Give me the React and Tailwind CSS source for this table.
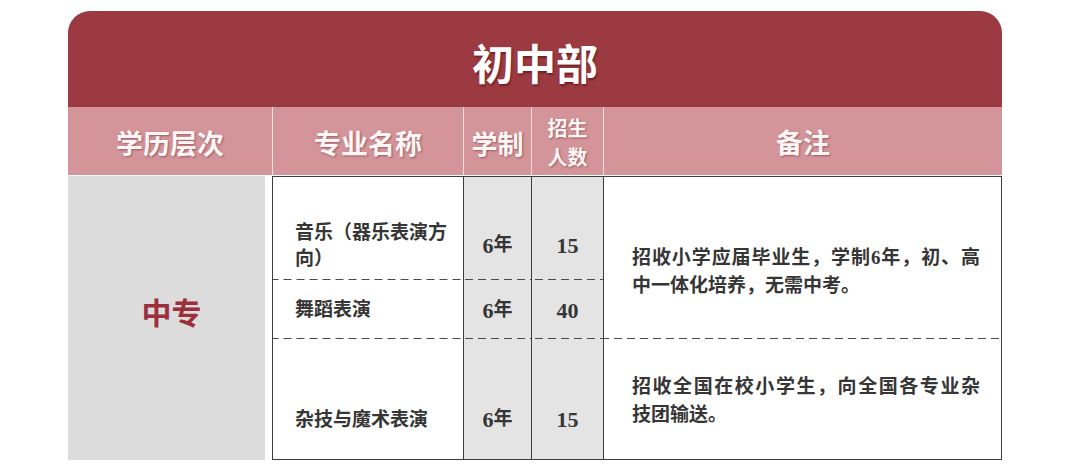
const dashB =
  "bg-[linear-gradient(to_right,#4a4a4a_8px,transparent_8px)] bg-[length:13px_1px] bg-repeat-x bg-bottom";
const dashT =
  "bg-[linear-gradient(to_right,#4a4a4a_8px,transparent_8px)] bg-[length:13px_1px] bg-repeat-x bg-top";

const rows = [
  { lines: ["音乐（器乐表演方", "向）"], years: "6", count: "15", box: "h-[103px] pt-[34px]", dash: dashB },
  { lines: ["舞蹈表演"], years: "6", count: "40", box: "h-[58px] pt-[2px]", dash: "" },
];

function Row({ lines, years, count, box, dash }) {
  return (
    <div className="flex">
      <div className={`w-[190px] pl-[22px] flex flex-col justify-center ${box} ${dash}`}>
        {lines.map((l) => (
          <div key={l} className="leading-[26px]">{l}</div>
        ))}
      </div>
      <div className={`w-[68px] border-l border-[#3d3d3d] bg-[#e4e4e4] flex items-center justify-center ${box} ${dash}`}>
        <span className="text-[22px]">{years}</span>
        <span>年</span>
      </div>
      <div className={`w-[72px] border-l border-[#3d3d3d] bg-[#e4e4e4] flex items-center justify-center text-[22px] ${box} ${dash}`}>
        {count}
      </div>
    </div>
  );
}

function Note({ first, rest }) {
  return (
    <div className="w-[348px]">
      <div className="text-justify [text-align-last:justify] leading-[28px]">{first}</div>
      <div className="leading-[28px]">{rest}</div>
    </div>
  );
}

export default function App() {
  return (
    <div className="w-[1071px] h-[476px] bg-white pt-[11px] pl-[68px] font-['Noto_Sans_CJK_SC',sans-serif]">
      <div className="w-[934px]">
        {/* title */}
        <div className="h-[96px] rounded-t-[22px] bg-[#9c3a41] flex items-center justify-center pt-[6px]">
          <h1 className="text-[42px] font-bold text-white leading-none [text-shadow:1px_2px_2px_rgba(60,0,0,0.45)]">
            初中部
          </h1>
        </div>

        {/* header */}
        <div className="grid grid-cols-[204px_191px_68px_72px_399px] h-[68px] bg-[#d3959a] text-[#fff7f7] font-bold [text-shadow:1px_1px_2px_rgba(90,20,25,0.45)]">
          <div className="flex items-center justify-center text-[27px] pt-[5px]">学历层次</div>
          <div className="flex items-center justify-center text-[27px] pt-[5px] border-l border-[#f3dfe0]">专业名称</div>
          <div className="flex items-center justify-center text-[26px] pt-[3px] border-l border-[#f3dfe0]">学制</div>
          <div className="flex flex-col items-center justify-center text-[20px] pt-[2px] border-l border-[#f3dfe0]">
            <span className="leading-[29px]">招生</span>
            <span className="leading-[29px]">人数</span>
          </div>
          <div className="flex items-center justify-center text-[27px] pt-[3px] border-l border-[#f3dfe0]">备注</div>
        </div>

        {/* body */}
        <div className="flex mt-px font-['Liberation_Serif','Noto_Sans_CJK_SC',serif] font-bold text-[19px] text-[#363636]">
          <div className="w-[204px] flex pr-[7px]">
            <div className="flex-1 bg-[#dcdcdc] flex items-center justify-center pl-[10px] pb-[14px]">
              <span className="text-[30px] text-[#9b2f3b] font-['Noto_Sans_CJK_SC',sans-serif]">中专</span>
            </div>
          </div>

          <div className="w-[730px] border border-[#3d3d3d] flex flex-col">
            <div className="flex">
              <div className="w-[330px] flex flex-col">
                {rows.map((r) => (
                  <Row key={r.count + r.lines[0]} {...r} />
                ))}
              </div>
              <div className="w-[398px] border-l border-[#3d3d3d] pl-[28px] pt-[28px] flex items-center">
                <Note first="招收小学应届毕业生，学制6年，初、高" rest="中一体化培养，无需中考。" />
              </div>
            </div>
            <div className="flex">
              <Row lines={["杂技与魔术表演"]} years="6" count="15" box="h-[121px] pt-[42px]" dash={dashT} />
              <div className={`w-[398px] border-l border-[#3d3d3d] pl-[28px] pt-[4px] flex items-center ${dashT}`}>
                <Note first="招收全国在校小学生，向全国各专业杂" rest="技团输送。" />
              </div>
            </div>
          </div>
        </div>
      </div>
    </div>
  );
}
